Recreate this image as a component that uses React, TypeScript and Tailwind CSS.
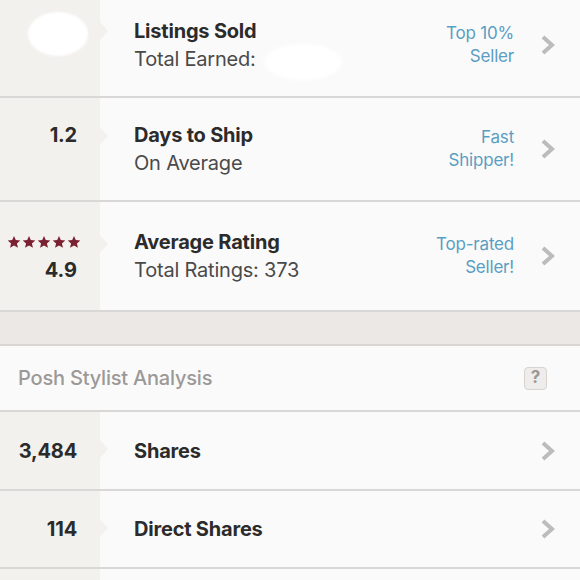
import React from "react";

const font = { fontFamily: "Inter, Lato, Arial, sans-serif" };

function Chevron() {
  return (
    <svg width="16" height="22" viewBox="0 0 16 22" className="shrink-0">
      <polyline points="3,3 12,11 3,19" fill="none" stroke="#bcbcbc" strokeWidth="4" />
    </svg>
  );
}

function Star() {
  return (
    <svg width="14" height="14" viewBox="0 0 24 24">
      <path d="M12 1.5l3.1 7.1 7.7.7-5.8 5.1 1.8 7.6L12 18l-6.8 4 1.8-7.6L1.2 9.3l7.7-.7z" fill="#7b2232" />
    </svg>
  );
}

function Notch({ top }: { top: string }) {
  return (
    <div
      className={`absolute right-[-8px] ${top} w-0 h-0 border-y-[9px] border-y-transparent border-l-[8px] border-l-[#f3f1ee]`}
    />
  );
}

interface StatRowProps {
  height: string;
  left: React.ReactNode;
  left2?: React.ReactNode;
  title: string;
  sub?: string;
  badge?: [string, string];
  notchTop: string;
  extra?: string;
}

function StatRow({ height, left, left2, title, sub, badge, notchTop, extra = "" }: StatRowProps) {
  return (
    <div className={`flex ${height} border-b-2 border-[#dad8d6]`}>
      <div className={`relative w-[100px] shrink-0 bg-[#f3f1ee] flex flex-col justify-center items-end pr-[23px] ${extra}`}>
        <div className="h-[28px] flex items-center text-[20px] font-bold tracking-[-0.2px] text-[#2b2b2b]">{left}</div>
        {sub && <div className="h-[28px] flex items-center text-[20px] font-bold text-[#2b2b2b]">{left2}</div>}
        <Notch top={notchTop} />
      </div>
      <div className={`flex-1 flex items-center pl-[34px] pr-[24px] ${extra}`}>
        <div className="flex-1 flex flex-col">
          <div className="h-[28px] flex items-center text-[20px] font-bold tracking-[-0.2px] text-[#2b2b2b]">{title}</div>
          {sub && <div className="h-[28px] flex items-center text-[20px] tracking-[-0.2px] text-[#4a4a4a]">{sub}</div>}
        </div>
        {badge && (
          <div className="text-right text-[17px] leading-[23px] tracking-[-0.2px] text-[#5a9ec4] mr-[26px]">
            <div>{badge[0]}</div>
            <div>{badge[1]}</div>
          </div>
        )}
        <Chevron />
      </div>
    </div>
  );
}

export default function App() {
  return (
    <div className="relative w-[580px] h-[580px] overflow-hidden bg-[#fbfafa]" style={font}>
      <StatRow
        height="h-[98px]"
        extra="pb-[6px]"
        left=""
        title="Listings Sold"
        sub="Total Earned:"
        badge={["Top 10%", "Seller"]}
        notchTop="top-[22px]"
      />
      <StatRow
        height="h-[104px]"
        left="1.2"
        title="Days to Ship"
        sub="On Average"
        badge={["Fast", "Shipper!"]}
        notchTop="top-[29px]"
      />
      <StatRow
        height="h-[110px]"
        left={
          <span className="flex gap-[1px] mr-[-4px]">
            <Star />
            <Star />
            <Star />
            <Star />
            <Star />
          </span>
        }
        left2="4.9"
        title="Average Rating"
        sub="Total Ratings: 373"
        badge={["Top-rated", "Seller!"]}
        notchTop="top-[33px]"
      />

      <div className="h-[34px] bg-[#ebe8e5] border-b-2 border-[#d8d5d3]" />

      <div className="flex items-center justify-between h-[66px] border-b-2 border-[#dad8d6] pl-[18px] pr-[33px]">
        <span className="text-[20px] font-medium tracking-[-0.2px] text-[#9b9997]">Posh Stylist Analysis</span>
        <span className="w-[23px] h-[23px] rounded-[4px] border border-[#d6d3d1] bg-[#efedeb] flex items-center justify-center text-[17px] font-bold text-[#9a9896]">
          ?
        </span>
      </div>

      <StatRow height="h-[79px]" left="3,484" title="Shares" notchTop="top-[28px]" />
      <StatRow height="h-[78px]" left="114" title="Direct Shares" notchTop="top-[28px]" />
      <div className="flex h-[20px]">
        <div className="w-[100px] bg-[#f3f1ee]" />
        <div className="flex-1" />
      </div>

      {/* censor blobs */}
      <div className="absolute left-[28px] top-[12px] w-[60px] h-[44px] rounded-[50%] bg-white blur-[1px]" />
      <div className="absolute left-[264px] top-[44px] w-[78px] h-[36px] rounded-[50%] bg-white blur-[2px]" />
    </div>
  );
}
